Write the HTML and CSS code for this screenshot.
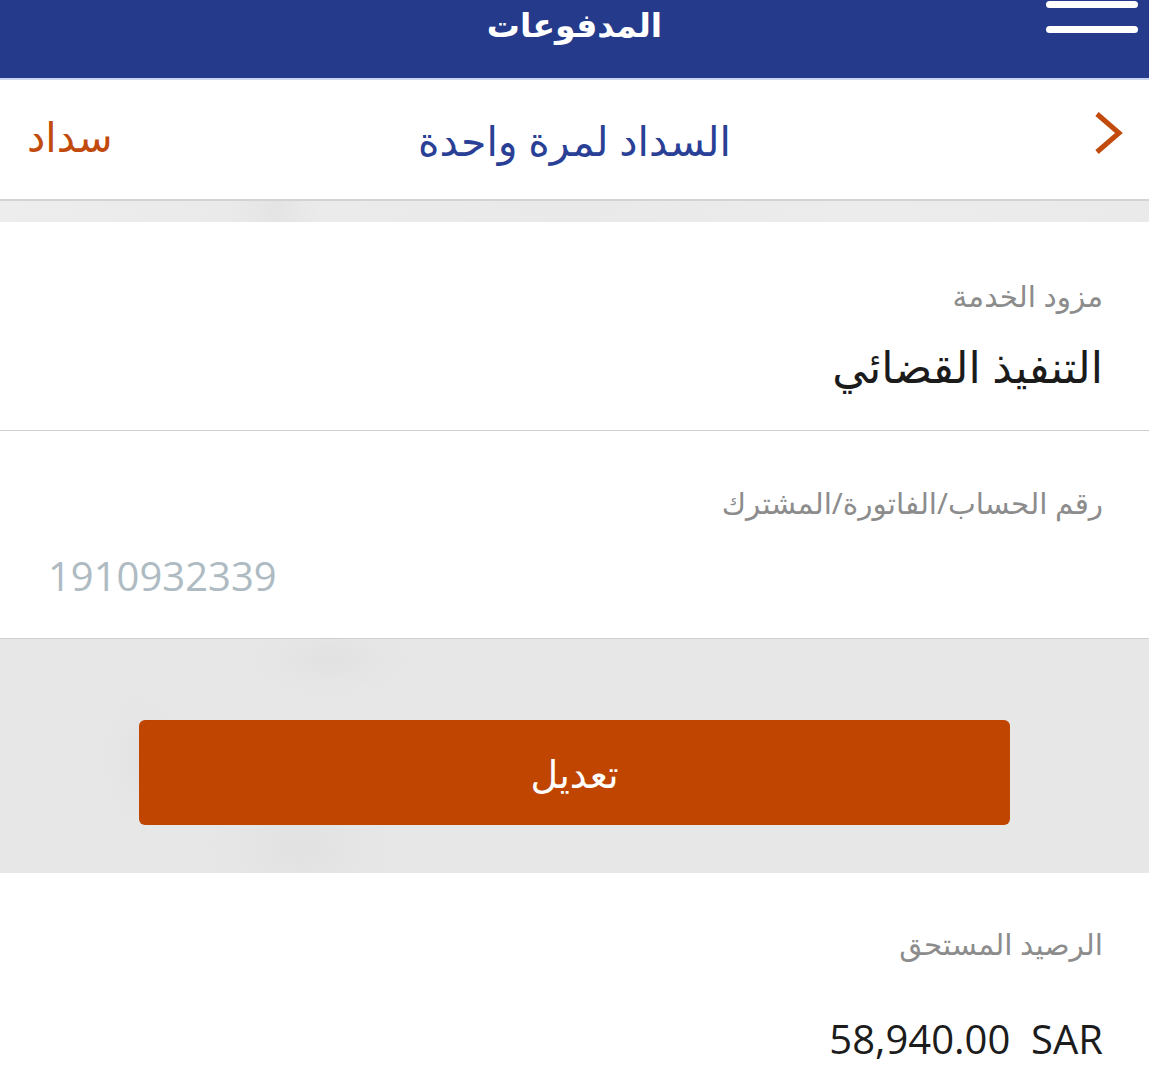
FILE: index.html
```html
<!DOCTYPE html>
<html lang="ar" dir="rtl">
<head>
<meta charset="utf-8">
<title>المدفوعات</title>
<link rel="stylesheet" href="styles.css">
</head>
<body>
<header class="topbar">
  <h1 class="topbar-title">المدفوعات</h1>
  <div class="menu-btn" aria-label="menu"><span class="bar bar-1"></span><span class="bar bar-2"></span></div>
</header>
<nav class="subbar">
  <div class="back">
    <svg width="34" height="46" viewBox="0 0 34 46"><path d="M6 4 L28 23 L6 42" fill="none" stroke="#c14a0c" stroke-width="5" stroke-linecap="butt" stroke-linejoin="miter"/></svg>
  </div>
  <div class="subbar-title">السداد لمرة واحدة</div>
  <div class="brand">سداد</div>
</nav>
<div class="strip"></div>
<section class="field field-provider">
  <div class="label">مزود الخدمة</div>
  <div class="value">التنفيذ القضائي</div>
</section>
<section class="field field-account">
  <div class="label">رقم الحساب/الفاتورة/المشترك</div>
  <div class="number-row"><span class="number">1910932339</span></div>
</section>
<div class="action-area">
  <button class="btn-edit">تعديل</button>
</div>
<section class="field field-balance">
  <div class="label">الرصيد المستحق</div>
  <div class="amount"><span dir="ltr">58,940.00&nbsp;&nbsp;SAR</span></div>
</section>
</body>
</html>
```
FILE: styles.css
```css
html, body {
  margin: 0;
  padding: 0;
  background: #ffffff;
}
body {
  font-family: "Noto Sans", "DejaVu Sans", sans-serif;
  width: 1149px;
  height: 1067px;
  overflow: hidden;
}
.topbar {
  position: relative;
  height: 78px;
  background: #263a8b;
  border-bottom: 2px solid #c9d5ef;
  display: flex;
  justify-content: center;
  align-items: flex-start;
}
.topbar-title {
  margin: 0;
  padding-top: 2px;
  color: #ffffff;
  font-size: 33px;
  font-weight: 700;
  line-height: 46px;
}
.menu-btn {
  position: absolute;
  right: 11px;
  top: 0;
  width: 92px;
  height: 40px;
}
.bar {
  position: absolute;
  left: 0;
  right: 0;
  height: 7px;
  border-radius: 4px;
  background: #ffffff;
}
.bar-1 { top: 1px; }
.bar-2 { top: 26px; }
.subbar {
  height: 119px;
  display: grid;
  grid-template-columns: 140px 1fr 140px;
  align-items: center;
  border-bottom: 2px solid #d3d3d3;
  background: #ffffff;
}
.back {
  display: flex;
  justify-content: flex-start;
}
.back svg { margin-right: 24px; margin-top: -14px; }
.subbar-title {
  text-align: center;
  color: #2a3f96;
  font-size: 41px;
  line-height: 54px;
}
.brand {
  color: #c14a0c;
  font-size: 41px;
  line-height: 54px;
  text-align: left;
  padding-left: 27px;
  margin-top: -8px;
}
.strip {
  height: 21px;
  background: linear-gradient(90deg, #ededed 0%, #eaeaea 20%, #e4e4e4 24%, #ebebeb 28%, #e9e9e9 50%, #ececec 75%, #eaeaea 100%);
}
.field {
  background: #ffffff;
  padding: 0 46px;
}
.field-provider {
  height: 209px;
  border-bottom: 1px solid #d0d0d0;
  padding-top: 53px;
  box-sizing: border-box;
}
.label {
  color: #8c8c8c;
  font-size: 29.5px;
  line-height: 42px;
}
.value {
  color: #1b1b1b;
  font-size: 44px;
  line-height: 60px;
  margin-top: 19px;
}
.field-account {
  height: 208px;
  padding-top: 51px;
  box-sizing: border-box;
  border-bottom: 1px solid #cfcfcf;
}
.number-row {
  text-align: left;
  padding-left: 2px;
  margin-top: 25px;
}
.number {
  color: #aebbc2;
  font-family: "Open Sans", "Noto Sans", sans-serif;
  font-size: 40px;
  line-height: 54px;
}
.action-area {
  height: 234px;
  background:
    radial-gradient(ellipse 110px 50px at 330px 20px, rgba(205,205,210,0.22), rgba(0,0,0,0) 70%),
    radial-gradient(ellipse 130px 80px at 300px 210px, rgba(205,205,212,0.22), rgba(0,0,0,0) 70%),
    radial-gradient(ellipse 50px 90px at 140px 120px, rgba(208,208,212,0.2), rgba(0,0,0,0) 70%),
    #e7e7e7;
  display: flex;
  justify-content: center;
  align-items: flex-start;
  padding-top: 81px;
  box-sizing: border-box;
}
.btn-edit {
  width: 871px;
  height: 105px;
  border: none;
  border-radius: 6px;
  background: #c04500;
  color: #ffffff;
  font-family: "Noto Sans", "DejaVu Sans", sans-serif;
  font-size: 38px;
  padding: 0;
}
.field-balance {
  padding-top: 50px;
}
.amount {
  color: #1c1c1c;
  font-family: "Open Sans", "Noto Sans", sans-serif;
  font-size: 40px;
  line-height: 56px;
  margin-top: 46px;
}
```
